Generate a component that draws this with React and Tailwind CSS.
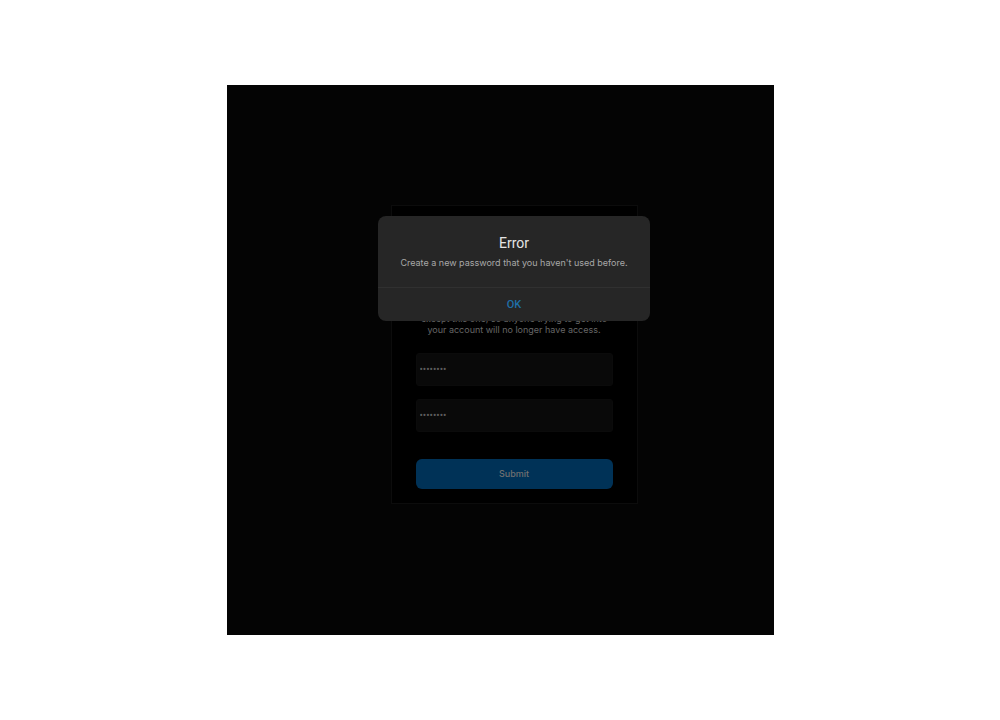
/**
 * App.jsx — Password reset page with the error dialog open.
 */

import { useState } from "react";

const FIELDS = [
  { id: "new_password", label: "New password" },
  { id: "confirm_password", label: "New password, again" },
];

function PasswordField({ id, label, value, onChange }) {
  return (
    <input
      id={id}
      type="password"
      aria-label={label}
      value={value}
      onChange={onChange}
      className="block w-full h-[33px] px-[3px] rounded-[3px] border border-[#0b0b0b] bg-[#090909] text-[10px] text-[#5c5c5c] outline-none"
    />
  );
}

function ErrorDialog({ onClose }) {
  return (
    <div className="absolute inset-0 flex items-start justify-center pl-7 pt-[131px]">
      <div
        role="alertdialog"
        aria-labelledby="error-title"
        aria-describedby="error-message"
        className="w-full max-w-[272px] rounded-lg bg-[#262626] text-center"
      >
        <div className="px-4 pt-[19px] pb-[18px]">
          <h2 id="error-title" className="text-[14px] leading-4 text-[#e4e4e4]">Error</h2>
          <p id="error-message" className="mt-[6px] font-[Inter,Roboto,sans-serif] text-[9px] leading-3 text-[#a8a8a8]">
            Create a new password that you haven't used before.
          </p>
        </div>
        <button
          type="button"
          onClick={onClose}
          className="block w-full h-[34px] border-t border-[#303030] text-[11px] leading-4 font-medium text-[#1f6fa8]"
        >
          OK
        </button>
      </div>
    </div>
  );
}

export default function App() {
  const [form, setForm] = useState({ new_password: "password", confirm_password: "password" });
  const [showError, setShowError] = useState(true);

  function handleSubmit(e) {
    e.preventDefault();
    setShowError(true);
  }

  return (
    <div className="min-h-screen flex items-center justify-center bg-white font-[Roboto,'Liberation_Sans',sans-serif]">
      <main className="relative w-full max-w-[547px] pl-7 pt-[120px] pb-[131px] flex justify-center bg-[#040404]">
        <form
          onSubmit={handleSubmit}
          className="w-full max-w-[247px] px-6 pt-[107px] pb-[14px] border border-[#0c0c0c] bg-black"
        >
          <p className="text-center font-[Inter,Roboto,sans-serif] text-[9px] leading-[11px] whitespace-nowrap text-[#666666]">
            except this one, so anyone trying to get into
            <br />
            your account will no longer have access.
          </p>

          {/* Password fields */}
          <div className="mt-[18px] space-y-[13px]">
            {FIELDS.map((f) => (
              <PasswordField
                key={f.id}
                id={f.id}
                label={f.label}
                value={form[f.id]}
                onChange={(e) => setForm({ ...form, [f.id]: e.target.value })}
              />
            ))}
          </div>

          <button
            type="submit"
            className="mt-[27px] block w-full h-[30px] rounded-md bg-[#003257] font-[Inter,Roboto,sans-serif] text-[9px] font-medium text-[#707070]"
          >
            Submit
          </button>
        </form>

        {showError && <ErrorDialog onClose={() => setShowError(false)} />}
      </main>
    </div>
  );
}
